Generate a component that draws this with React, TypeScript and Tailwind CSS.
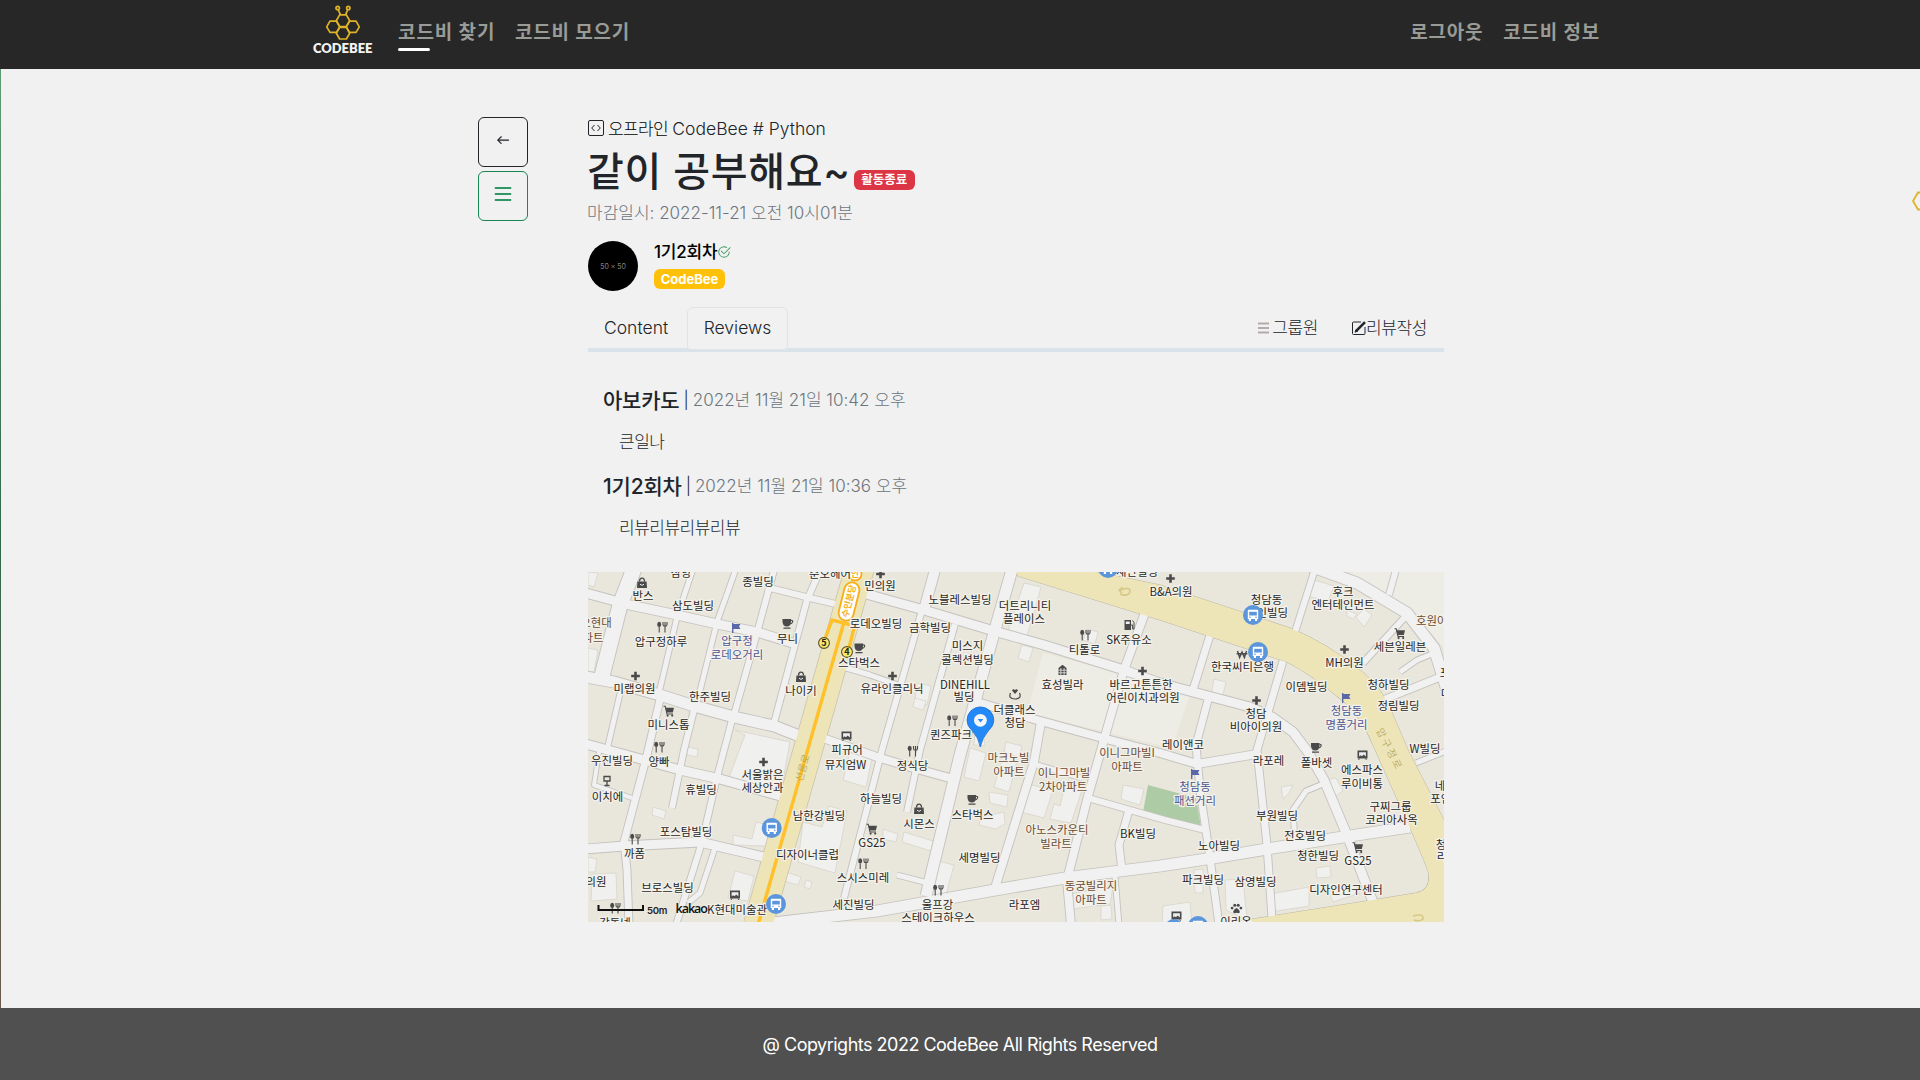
import React from "react";

type Pt = [number, number];

/* ---------- Logo ---------- */

const hex = (cx: number, cy: number, r: number) =>
  [0, 60, 120, 180, 240, 300]
    .map((a) => {
      const t = (a * Math.PI) / 180;
      return `${(cx + r * Math.cos(t)).toFixed(2)},${(cy + r * Math.sin(t)).toFixed(2)}`;
    })
    .join(" ");

function Logo() {
  return (
    <svg width="62" height="56" viewBox="312 0 62 56" className="block shrink-0">
      <g fill="none" stroke="#dfb327" strokeWidth="1.7" strokeLinejoin="round">
        <polygon points={hex(343, 20.7, 6.7)} />
        <polygon points={hex(333.2, 26.8, 6.5)} />
        <polygon points={hex(352.8, 26.8, 6.5)} />
        <polygon points={hex(343, 33.2, 6.7)} />
        <path d="M340.4 14.6 L338.2 9.6 M345.6 14.6 L347.8 9.6" />
        <circle cx="337.7" cy="8" r="1.7" />
        <circle cx="348.3" cy="8" r="1.7" />
      </g>
      <text x="313" y="53" textLength="59.5" lengthAdjust="spacingAndGlyphs" fill="#f4f4f4" fontFamily="Lato, sans-serif" fontWeight="800" fontSize="12.4">
        CODEBEE
      </text>
    </svg>
  );
}

/* ---------- Map data ---------- */

const roads: { w: number; p: Pt[] }[] = [
  { w: 15, p: [[635, 566], [620, 605], [602, 676]] },
  { w: 9, p: [[586, 593], [630, 605], [677, 615], [717, 624], [757, 632], [796, 644]] },
  { w: 11, p: [[586, 677], [614, 682], [660, 695], [694, 706], [734, 717], [774, 726], [802, 737]] },
  { w: 5, p: [[622, 685], [607, 750]] },
  { w: 5, p: [[694, 566], [677, 617], [659, 693]] },
  { w: 5, p: [[737, 566], [717, 622], [697, 703]] },
  { w: 6, p: [[774, 570], [757, 633], [734, 715]] },
  { w: 6, p: [[822, 566], [807, 600], [774, 723]] },
  { w: 6, p: [[766, 587], [810, 598], [840, 605]] },
  { w: 9, p: [[586, 744], [637, 758], [680, 770], [720, 779], [784, 797]] },
  { w: 7, p: [[661, 695], [647, 755], [624, 842], [627, 870], [629, 925]] },
  { w: 6, p: [[694, 710], [684, 750], [672, 808]] },
  { w: 6, p: [[732, 720], [717, 777], [702, 842], [676, 925]] },
  { w: 5, p: [[715, 848], [700, 893], [688, 903]] },
  { w: 9, p: [[586, 849], [624, 846], [700, 842], [764, 857]] },
  { w: 4, p: [[599, 752], [594, 785], [632, 798]] },
  { w: 8, p: [[820, 737], [877, 757], [917, 769], [957, 780]] },
  { w: 9, p: [[852, 590], [877, 597], [924, 610], [994, 631], [1044, 645], [1124, 670], [1160, 683], [1193, 692], [1250, 707], [1272, 717], [1293, 732], [1308, 752], [1324, 780], [1347, 835], [1373, 902]] },
  { w: 10, p: [[936, 566], [924, 610]] },
  { w: 6, p: [[922, 610], [882, 750], [844, 898]] },
  { w: 6, p: [[955, 624], [920, 750], [907, 812]] },
  { w: 11, p: [[1013, 566], [994, 633], [960, 755], [926, 896]] },
  { w: 5, p: [[836, 665], [870, 675], [898, 685]] },
  { w: 8, p: [[977, 702], [1037, 720], [1110, 740], [1160, 753], [1197, 764], [1257, 754]] },
  { w: 8, p: [[1041, 722], [1034, 762], [995, 888]] },
  { w: 5, p: [[1034, 764], [1082, 778]] },
  { w: 8, p: [[1146, 610], [1124, 670], [1105, 736], [1088, 796], [1067, 880], [1071, 925]] },
  { w: 6, p: [[1088, 798], [1130, 810], [1165, 820], [1205, 830]] },
  { w: 7, p: [[1129, 810], [1119, 845], [1122, 870]] },
  { w: 11, p: [[755, 925], [877, 911], [995, 890], [1065, 878], [1120, 871], [1160, 866], [1213, 858], [1273, 848], [1343, 837], [1410, 827]] },
  { w: 5, p: [[897, 875], [928, 883]] },
  { w: 5, p: [[1115, 876], [1119, 925]] },
  { w: 11, p: [[1310, 566], [1357, 583], [1407, 613], [1434, 648], [1447, 690]] },
  { w: 6, p: [[1314, 572], [1295, 632]] },
  { w: 6, p: [[1397, 566], [1389, 595]] },
  { w: 6, p: [[1405, 617], [1363, 663]] },
  { w: 5, p: [[1437, 652], [1417, 660], [1400, 672]] },
  { w: 7, p: [[1383, 700], [1445, 675]] },
  { w: 5, p: [[1416, 763], [1446, 751]] },
  { w: 7, p: [[1210, 635], [1193, 690]] },
  { w: 7, p: [[1208, 700], [1196, 745], [1200, 790], [1210, 858], [1219, 925]] },
  { w: 7, p: [[1283, 661], [1257, 750], [1267, 845], [1272, 918]] },
  { w: 5, p: [[1323, 784], [1306, 791], [1293, 810], [1295, 842]] },
];

const buildings: string[] = [
  "588,585 594,587 598,573 588,572",
  "588,648 598,650 594,672 588,672",
  "1024,583 1041,587 1027,636 1008,631",
  "1022,645 1033,648 1029,662 1018,658",
  "1087,629 1098,632 1095,644 1083,640",
  "735,730 790,742 780,797 728,780 745,735",
  "687,747 698,749 697,757 687,755",
  "653,807 666,811 664,819 652,815",
  "588,857 597,859 595,872 588,872",
  "592,874 616,873 617,899 591,901",
  "733,835 752,839 756,822 776,827 766,846 733,845",
  "735,871 754,876 748,901 728,898",
  "803,822 822,827 829,806 847,811 835,873 798,862",
  "786,872 801,877 798,885 784,881",
  "806,880 812,882 810,889 804,887",
  "850,752 872,758 866,787 843,780",
  "970,748 986,753 979,781 964,777",
  "1005,748 1021,745 1009,792 994,787",
  "989,792 1008,795 1007,807 990,803",
  "981,817 1004,812 1005,824 995,829 979,825",
  "1027,784 1053,790 1044,818 1021,812",
  "1065,785 1082,790 1071,823 1050,819 1054,804 1060,806",
  "1123,785 1144,789 1140,805 1121,799",
  "904,832 933,841 931,851 902,842",
  "883,829 898,834 896,842 883,839",
  "938,861 954,865 946,895 930,897",
  "1071,894 1113,886 1110,904 1072,909",
  "1101,906 1111,905 1112,919 1101,920",
  "1163,906 1190,902 1192,925 1162,925",
  "1194,870 1203,869 1203,893 1195,893",
  "1225,880 1243,879 1247,920 1226,910",
  "1271,894 1309,887 1309,906 1271,912",
  "1316,868 1330,866 1331,877 1317,878",
  "1329,892 1356,885 1360,893 1333,902",
  "1314,580 1334,586 1328,601 1307,596",
  "1356,617 1364,609 1372,615 1364,627",
  "1347,610 1357,614 1353,619 1347,616",
  "1214,679 1226,682 1222,699 1211,696",
  "1281,787 1293,785 1289,793 1283,799",
  "1327,780 1336,778 1343,791 1334,797",
  "917,683 931,686 927,705 915,700",
  "915,698 926,701 923,710 913,707",
  "974,745 985,746 983,733 975,731",
  "1006,742 1022,746 1019,757 1004,752",
];

type Label = { x: number; y: number; t: string; c?: string; s?: number };
const BROWN = "#6b4c34";
const NAVY = "#4b5692";
const labels: Label[] = [
  { x: 681, y: 573, t: "삼양" },
  { x: 643, y: 596, t: "반스" },
  { x: 758, y: 582, t: "종빌딩" },
  { x: 693, y: 605.5, t: "삼도빌딩" },
  { x: 830, y: 574, t: "준오헤어" },
  { x: 880, y: 586, t: "민의원" },
  { x: 596, y: 623, t: "오현대", c: BROWN },
  { x: 593, y: 637.5, t: "파트", c: BROWN },
  { x: 661, y: 641.5, t: "압구정하루" },
  { x: 737, y: 640.5, t: "압구정", c: NAVY },
  { x: 737, y: 654.5, t: "로데오거리", c: NAVY },
  { x: 787.5, y: 638.5, t: "무니" },
  { x: 876, y: 623.5, t: "로데오빌딩" },
  { x: 930, y: 627.5, t: "금학빌딩" },
  { x: 859, y: 662.5, t: "스타벅스" },
  { x: 634.5, y: 688.5, t: "미랩의원" },
  { x: 710, y: 697, t: "한주빌딩" },
  { x: 801, y: 690.5, t: "나이키" },
  { x: 892, y: 688.5, t: "유라인클리닉" },
  { x: 668.5, y: 724.5, t: "미니스톱" },
  { x: 847, y: 750, t: "피규어" },
  { x: 845.5, y: 764.5, t: "뮤지엄W" },
  { x: 612, y: 760.5, t: "우진빌딩" },
  { x: 659, y: 762, t: "양빠" },
  { x: 607.5, y: 796.5, t: "이치에" },
  { x: 701, y: 789.5, t: "휴빌딩" },
  { x: 762.5, y: 774.5, t: "서울밝은" },
  { x: 762.5, y: 788, t: "세상안과" },
  { x: 819, y: 815.5, t: "남한강빌딩" },
  { x: 881, y: 798.5, t: "하늘빌딩" },
  { x: 686, y: 831.5, t: "포스탐빌딩" },
  { x: 634.5, y: 853.5, t: "까폼" },
  { x: 807.5, y: 854.5, t: "디자이너클럽" },
  { x: 872, y: 843, t: "GS25" },
  { x: 863, y: 878, t: "스시스미레" },
  { x: 596, y: 882, t: "의원" },
  { x: 667.5, y: 887.5, t: "브로스빌딩" },
  { x: 853.5, y: 904.5, t: "세진빌딩" },
  { x: 737, y: 909.5, t: "K현대미술관" },
  { x: 615, y: 923, t: "강동넷" },
  { x: 960, y: 600, t: "노블레스빌딩" },
  { x: 1025, y: 605.5, t: "더트리니티" },
  { x: 1024, y: 618.5, t: "플레이스" },
  { x: 967.5, y: 646, t: "미스지" },
  { x: 967.5, y: 659.5, t: "콜렉션빌딩" },
  { x: 1084.5, y: 649.5, t: "티톨로" },
  { x: 1129, y: 640, t: "SK주유소" },
  { x: 965, y: 685, t: "DINEHILL" },
  { x: 964, y: 697, t: "빌딩" },
  { x: 1062.5, y: 685, t: "효성빌라" },
  { x: 1141, y: 684.5, t: "바르고튼튼한" },
  { x: 1143, y: 697.5, t: "어린이치과의원" },
  { x: 1014.5, y: 709.5, t: "더클래스" },
  { x: 1015, y: 722.5, t: "청담" },
  { x: 951, y: 734.5, t: "퀸즈파크" },
  { x: 912.5, y: 765.5, t: "정식당" },
  { x: 1008.5, y: 758, t: "마크노빌", c: BROWN },
  { x: 1009, y: 771.5, t: "아파트", c: BROWN },
  { x: 1064, y: 773, t: "이니그마빌", c: BROWN },
  { x: 1063, y: 787, t: "2차아파트", c: BROWN },
  { x: 1127, y: 753, t: "이니그마빌I", c: BROWN },
  { x: 1127, y: 767, t: "아파트", c: BROWN },
  { x: 972.5, y: 814.5, t: "스타벅스" },
  { x: 919, y: 824, t: "시몬스" },
  { x: 1057, y: 830, t: "아노스카운티", c: BROWN },
  { x: 1056, y: 844, t: "빌라트", c: BROWN },
  { x: 1138, y: 834, t: "BK빌딩" },
  { x: 979.5, y: 858, t: "세명빌딩" },
  { x: 1091, y: 886, t: "동궁빌리지", c: BROWN },
  { x: 1091, y: 899.5, t: "아파트", c: BROWN },
  { x: 1024.5, y: 904.5, t: "라포엠" },
  { x: 937.5, y: 904.5, t: "울프강" },
  { x: 938, y: 918, t: "스테이크하우스" },
  { x: 1137, y: 572, t: "새만빌딩" },
  { x: 1171, y: 592, t: "B&A의원" },
  { x: 1266.5, y: 600, t: "청담동" },
  { x: 1267, y: 613, t: "우인빌딩" },
  { x: 1343, y: 592, t: "후크" },
  { x: 1343, y: 605, t: "엔터테인먼트" },
  { x: 1437, y: 621, t: "호원아트", c: BROWN },
  { x: 1400, y: 647, t: "세븐일레븐" },
  { x: 1344.5, y: 663, t: "MH의원" },
  { x: 1242.5, y: 667, t: "한국씨티은행" },
  { x: 1306.5, y: 687, t: "이뎀빌딩" },
  { x: 1388.5, y: 685, t: "청하빌딩" },
  { x: 1398.5, y: 706, t: "정림빌딩" },
  { x: 1346.5, y: 711, t: "청담동", c: NAVY },
  { x: 1346.5, y: 725, t: "명품거리", c: NAVY },
  { x: 1256, y: 714, t: "청담" },
  { x: 1256, y: 727, t: "비아이의원" },
  { x: 1183, y: 745, t: "레이앤코" },
  { x: 1425, y: 749, t: "W빌딩" },
  { x: 1268.5, y: 761, t: "라포레" },
  { x: 1316.5, y: 762.5, t: "폴바셋" },
  { x: 1362, y: 770, t: "에스파스" },
  { x: 1362, y: 783.5, t: "루이비통" },
  { x: 1195, y: 787, t: "청담동", c: NAVY },
  { x: 1195, y: 800.5, t: "패션거리", c: NAVY },
  { x: 1277, y: 816, t: "부원빌딩" },
  { x: 1390.5, y: 807, t: "구찌그룹" },
  { x: 1391.5, y: 820, t: "코리아사옥" },
  { x: 1440, y: 786, t: "네" },
  { x: 1446, y: 799, t: "포인트" },
  { x: 1219, y: 845.5, t: "노아빌딩" },
  { x: 1305, y: 835.5, t: "전호빌딩" },
  { x: 1318, y: 856, t: "청한빌딩" },
  { x: 1358, y: 861, t: "GS25" },
  { x: 1441, y: 845, t: "청" },
  { x: 1442, y: 857, t: "리" },
  { x: 1203, y: 880, t: "파크빌딩" },
  { x: 1255.5, y: 882, t: "삼영빌딩" },
  { x: 1346, y: 890, t: "디자인연구센터" },
  { x: 1236, y: 922, t: "이리온" },
  { x: 1445, y: 673, t: "포" },
  { x: 1446, y: 694, t: "더" },
];

type Kind = "fork" | "cup" | "bag" | "plus" | "cart" | "flag" | "photo" | "fuel" | "ring" | "tower" | "wine" | "won" | "paw";
const pois: [Kind, number, number][] = [
  ["bag", 642, 583], ["fork", 662, 627], ["flag", 736, 628], ["cup", 787.5, 623.5], ["cup", 859.5, 648],
  ["plus", 635.5, 676], ["bag", 801, 677], ["cart", 669, 711], ["fork", 659, 747], ["photo", 846.5, 736],
  ["plus", 763.5, 762], ["wine", 607, 781], ["fork", 635, 839], ["cart", 872, 829], ["fork", 863, 863.5],
  ["photo", 735, 895], ["fork", 615, 908], ["plus", 880.5, 574], ["plus", 892.5, 676], ["fork", 952, 720.5],
  ["ring", 1015, 694], ["fork", 1085, 635], ["fuel", 1129, 625], ["tower", 1062.5, 670], ["plus", 1142.5, 671],
  ["fork", 912.5, 751], ["cup", 972.5, 799.5], ["bag", 919, 809], ["fork", 938, 890], ["plus", 1170.5, 578.5],
  ["won", 1242, 654], ["plus", 1344.5, 649.5], ["cart", 1400, 633.5], ["flag", 1346, 698], ["plus", 1256.5, 700.5],
  ["cup", 1316, 747.5], ["photo", 1362.5, 755], ["flag", 1195, 774], ["cart", 1358, 847.5], ["photo", 1176.5, 916],
  ["paw", 1236.5, 908.5],
];

function Poi({ kind, x, y }: { kind: Kind; x: number; y: number }) {
  const c = kind === "flag" ? "#5a68a8" : "#4a4a4a";
  const shapes: Record<Kind, React.ReactNode> = {
    fork: (
      <>
        <ellipse cx="-2.8" cy="-2.6" rx="2" ry="2.6" fill={c} />
        <path d="M-2.8 0V5.5M3 -1V5.5M1 -5V-2.5Q1 -0.7 3 -0.7Q5 -0.7 5 -2.5V-5M3 -5V-1" stroke={c} strokeWidth="1.1" fill="none" />
      </>
    ),
    cup: (
      <>
        <path d="M-5 -4.5H3.5V-1.5Q3 3 -0.5 3Q-4.5 3 -5 -1.5Z" fill={c} />
        <path d="M3.5 -3.2Q5.6 -3.4 5 -1.4Q4.4 .2 2.6 .3M-4 4.7H3" stroke={c} strokeWidth="1.2" fill="none" />
      </>
    ),
    bag: (
      <>
        <path d="M-4.6 -1.5H4.6L5 5H-5Z" fill={c} />
        <path d="M-2.5 -1.5Q-2.5 -4.8 0 -4.8Q2.5 -4.8 2.5 -1.5" stroke={c} strokeWidth="1.3" fill="none" />
        <path d="M-2 1.2Q0 3.6 2 1.2" stroke="#eee" strokeWidth="1" fill="none" />
      </>
    ),
    plus: <path d="M0 -4.3V4.3M-4.3 0H4.3" stroke={c} strokeWidth="2.6" />,
    cart: (
      <>
        <path d="M-3.5 -3.2H5L3.8 1.6H-2.4Z" fill={c} />
        <path d="M-5.5 -4.8H-3.8L-2 3H4" stroke={c} strokeWidth="1.1" fill="none" />
        <circle cx="-1.4" cy="4.6" r="1.1" fill={c} />
        <circle cx="3.2" cy="4.6" r="1.1" fill={c} />
      </>
    ),
    flag: <path d="M-4 -5H-2.6V-4H4.5L3 -1.5L4.5 1H-2.6V5H-4Z" fill={c} />,
    photo: (
      <>
        <path d="M-5 -4.5H5V3.5H-5Z" fill={c} />
        <path d="M-3.4 -2.8H3.4V1.6L1.2 -.6L-.6 1.2L-2 .2L-3.4 1.4Z" fill="#eee" />
        <path d="M-3 3.5L-4 5M3 3.5L4 5" stroke={c} />
      </>
    ),
    fuel: (
      <>
        <path d="M-4.5 -5H2V5H-4.5Z" fill={c} />
        <path d="M-3.2 -3.5H.7V-1H-3.2Z" fill="#eee" />
        <path d="M2 0H3.6V4H5V-2.5L3.5 -4.5" stroke={c} fill="none" />
      </>
    ),
    ring: (
      <>
        <path d="M-4.5 -1Q-7 4.8 0 5Q7 4.8 4.5 -1" stroke={c} strokeWidth="1.2" fill="none" />
        <path d="M0 0L-3 -3.4Q-2 -5.6 0 -4Q2 -5.6 3 -3.4Z" fill={c} />
      </>
    ),
    tower: (
      <>
        <path d="M-4 5V-2L0 -5.2L4 -2V5Z" fill={c} />
        <path d="M-1.6 -2V5M1.6 -2V5M-4 .2H4M-4 2.8H4" stroke="#eee" strokeWidth=".8" />
      </>
    ),
    wine: <path d="M-3 -4.5H3V0H-3ZM0 0V4.5M-2.5 4.5H2.5" stroke={c} strokeWidth="1.3" fill="none" />,
    won: <path d="M-4.5 -3L-2.4 3.5L0 -2L2.4 3.5L4.5 -3M-5.4 -.2H5.4" stroke={c} strokeWidth="1.4" fill="none" />,
    paw: (
      <g fill={c}>
        <path d="M0 -.6Q3.6 1.4 3.3 4Q1.8 5.2 0 4.2Q-1.8 5.2 -3.3 4Q-3.6 1.4 0 -.6Z" />
        <circle cx="-4.4" cy="-.4" r="1.4" />
        <circle cx="-1.7" cy="-3.2" r="1.5" />
        <circle cx="1.7" cy="-3.2" r="1.5" />
        <circle cx="4.4" cy="-.4" r="1.4" />
      </g>
    ),
  };
  return <g transform={`translate(${x} ${y})`}>{shapes[kind]}</g>;
}

const stops: Pt[] = [[771.7, 828], [776, 904], [1253, 615], [1258, 652], [1108, 568], [1198, 926], [1174, 929]];

function MapView() {
  const line = (p: Pt[]) => p.map((q) => q.join(",")).join(" ");
  const avenue =
    "M1077 568 L1160 585 L1290 628 Q1327 643 1360 670 Q1380 685 1390 708 L1408 750 L1446 824 V925 H1215 L1373 900 L1416 893 Q1430 890 1429 875 Q1428 868 1410 828 L1373 745 Q1360 712 1333 693 Q1310 674 1287 662 L1160 620 L1018 576 L1014 568 Z";
  return (
    <svg width="856" height="350" viewBox="588 572 856 350" className="block" fontFamily="'Noto Sans CJK KR', sans-serif">
      <rect x="588" y="572" width="856" height="350" fill="#e9e6dc" />
      <g fill="#eeede5">
        <polygon points="1043,653 1119,673 1103,731 1027,713" />
        <polygon points="1126,676 1190,694 1172,748 1110,733" />
        <polygon points="1346,570 1446,570 1446,650 1410,610" />
      </g>
      <g fill="#f0f0ef" stroke="#d8d4ca" strokeWidth=".8">
        {buildings.map((b) => (
          <polygon key={b} points={b} />
        ))}
      </g>
      <polygon points="1148,785 1196,798 1201,827 1143,812" fill="#adcba4" />
      <g fill="none" stroke="#c4c2bd" strokeLinejoin="round">
        {roads.map((r, i) => (
          <polyline key={i} points={line(r.p)} strokeWidth={r.w + 1.8} />
        ))}
      </g>
      <path d={avenue} fill="#ede4b8" stroke="#b9b5a6" />
      <path d="M864 553 L758 925" stroke="#c9c3ae" strokeWidth="30" />
      <g fill="none" stroke="#f1f1f1" strokeLinejoin="round">
        {roads.map((r, i) => (
          <polyline key={i} points={line(r.p)} strokeWidth={r.w} />
        ))}
      </g>
      <path d={avenue} fill="#ede4b8" />
      <path d="M864 553 L758 925" stroke="#ede4b8" strokeWidth="28.4" />
      <g fill="none" stroke="#ffc02a" strokeWidth="3.4">
        <path d="M844 622 L758.5 923" />
        <path d="M825 639 L832 620 L848 624 L854 628 L849 648" />
      </g>
      <g stroke="#d6c885" fill="none" strokeWidth="1.5">
        <path d="M1120 590 Q1131 586 1130 592 Q1128 597 1120 594 M1123 587 L1119 590 L1122 593" />
        <path d="M1413 916 Q1424 913 1423 919 Q1420 922 1414 920" />
      </g>
      <g fill="#fff" stroke="#f7ad16" strokeWidth="1.8">
        <rect x="829.5" y="594" width="39" height="15" rx="7.5" transform="rotate(-76 849 601.5)" />
        <circle cx="855" cy="574" r="6.5" />
      </g>
      <g fill="#f7ad16" fontSize="9" fontWeight="700" textAnchor="middle">
        <text transform="translate(852 602) rotate(-76)">수인분당</text>
        <text x="855" y="577">인</text>
      </g>
      <g fill="#a39748" fontSize="10" textAnchor="middle">
        <text transform="translate(806 769) rotate(-73)">선릉로</text>
        <text transform="translate(1386 750) rotate(63)" textLength="44">압구정로</text>
      </g>
      {[[824, 643, "5"], [847, 652, "4"]].map(([x, y, n]) => (
        <g key={n}>
          <circle cx={x} cy={y} r="5.4" fill="#fbea68" stroke="#55502a" strokeWidth="1.1" />
          <text x={x} y={Number(y) + 3.4} fontSize="9" fontWeight="700" textAnchor="middle" fill="#222">{n}</text>
        </g>
      ))}
      {pois.map(([k, x, y]) => (
        <Poi key={`${x}-${y}`} kind={k} x={x} y={y} />
      ))}
      <g fontSize="11.4" textAnchor="middle" stroke="#f3f1ea" strokeWidth="2.6" strokeLinejoin="round" style={{ paintOrder: "stroke" }}>
        {labels.map((l) => (
          <text key={`${l.t}${l.x}${l.y}`} x={l.x} y={l.y + 4.2} fill={l.c ?? "#262626"} fontWeight="400">
            {l.t}
          </text>
        ))}
      </g>
      {stops.map(([x, y]) => (
        <g key={`${x}-${y}`} transform={`translate(${x} ${y})`}>
          <circle r="10" fill="#5b95dc" />
          <path d="M-4.5 -5.2H4.5Q5.2 -5.2 5.2 -4V4H-5.2V-4Q-5.2 -5.2 -4.5 -5.2ZM-4.2 4H-2V6H-4.2ZM2 4H4.2V6H2Z" fill="#fff" />
          <path d="M-3.8 -3.2H3.8V.5H-3.8Z" fill="#5b95dc" />
          <circle cx="-3" cy="2.2" r=".8" fill="#5b95dc" />
          <circle cx="3" cy="2.2" r=".8" fill="#5b95dc" />
        </g>
      ))}
      <path d="M980.3 747 Q979 738 972 730.5 Q967 726 967 720.3 A13.4 13.4 0 0 1 993.8 720.3 Q993.8 726 988.6 730.5 Q982 738 980.3 747Z" fill="#2389f7" stroke="#1b6cd0" strokeWidth=".8" />
      <circle cx="980.4" cy="720.3" r="6.4" fill="#f4f6f8" />
      <path d="M977.7 719 H983.3 L980.5 722.4Z" fill="#2389f7" />
      <path d="M598.5 905 V910 H643 V905" fill="none" stroke="#111" strokeWidth="2" />
      <text x="647" y="914" fontSize="9.6" fontWeight="600" fill="#222" fontFamily="Inter, sans-serif" textLength="20.5">50m</text>
      <text x="675.5" y="913" fontSize="12.5" fontWeight="600" fill="#111" fontFamily="'Open Sans', sans-serif" textLength="32.5">kakao</text>
    </svg>
  );
}

/* ---------- Page ---------- */

function Header() {
  return (
    <header className="flex h-[69px] justify-between bg-[#272727] pl-[312px] pr-[320px] text-[19px] font-bold leading-none text-[#999b97]">
      <div className="flex">
        <Logo />
        <nav className="flex gap-[20px] pl-[24px] pt-[23px]">
          <a className="flex w-[97px] flex-col gap-[6px] whitespace-nowrap tracking-[0.9px]">
            코드비 찾기
            <span className="h-[3px] w-8 rounded-sm bg-white" />
          </a>
          <a className="whitespace-nowrap tracking-[0.8px]">코드비 모으기</a>
        </nav>
      </div>
      <nav className="flex gap-[20px] pt-[23px] tracking-[0.8px]">
        <a>로그아웃</a>
        <a>코드비 정보</a>
      </nav>
    </header>
  );
}

function Review({ name, date, body }: { name: string; date: string; body: string }) {
  return (
    <article className="h-[86px] pl-[15px]">
      <div className="flex h-6 items-center gap-1 whitespace-nowrap text-[17px] leading-none">
        <h5 className="text-[21px] font-medium tracking-[-0.2px]">{name}</h5>
        <span>|</span>
        <span className="text-[#6c757d]">{date}</span>
      </div>
      <p className="mt-[18px] flex h-6 items-center pl-4 text-[17px] leading-none tracking-[-0.5px]">{body}</p>
    </article>
  );
}

export default function App() {
  return (
    <div className="relative flex h-[1080px] w-[1920px] flex-col overflow-hidden bg-[#f1f1f1] font-[Inter,'Noto_Sans_CJK_KR',sans-serif] font-light text-[#212529]">
      <Header />
      <main className="flex flex-1 pl-[478px] pt-[48px]">
        <aside className="flex w-[110px] flex-col gap-1">
          <button className="flex size-[50px] items-center justify-center rounded-md border border-[#212529] pb-1">
            <svg width="16" height="16" viewBox="0 0 16 16" fill="#212529">
              <path fillRule="evenodd" d="M15 8a.5.5 0 0 0-.5-.5H2.7l3.15-3.15a.5.5 0 1 0-.7-.7l-4 4a.5.5 0 0 0 0 .7l4 4a.5.5 0 0 0 .7-.7L2.7 8.5h11.8A.5.5 0 0 0 15 8z" transform="translate(1.6 1.6) scale(.82)" stroke="#212529" strokeWidth=".6" />
            </svg>
          </button>
          <button className="flex size-[50px] items-center justify-center rounded-md border border-[#198754] pb-1">
            <svg width="18" height="14" viewBox="0 0 18 14" stroke="#2f9667" strokeWidth="1.8" strokeLinecap="round">
              <path d="M1.5 1H16.5M1.5 7H16.5M1.5 13H16.5" />
            </svg>
          </button>
        </aside>

        <section className="w-[856px]">
          <div className="flex h-6 items-center gap-1 whitespace-nowrap text-[17px] leading-none">
            <svg width="16" height="16" viewBox="0 0 16 16" fill="none" stroke="#212529" className="-mt-[2px]">
              <rect x=".5" y=".5" width="15" height="15" rx="1.5" />
              <path d="M6.5 5L3.7 8L6.5 11M9.5 5L12.3 8L9.5 11" />
            </svg>
            <span><span className="tracking-[-0.6px] text-black">오프라인 </span><span className="text-[17.5px]">CodeBee # Python</span></span>
          </div>
          <div className="flex h-[60px] items-center whitespace-nowrap">
            <h1 className="-ml-px mt-[2px] text-[40px] font-medium leading-none tracking-[0.7px]">같이 공부해요~</h1>
            <span className="ml-[3px] mt-[18px] flex h-5 w-[61px] items-center justify-center rounded-md bg-[#dc3545] text-[12.5px] font-bold leading-none text-white">활동종료</span>
          </div>
          <p className="-ml-px flex h-6 items-center whitespace-nowrap text-[17px] leading-none text-[#6c757d]">마감일시: 2022-11-21 오전 10시01분</p>

          <div className="mt-4 flex h-[50px] gap-4">
            <div className="flex size-[50px] items-center justify-center rounded-full bg-black text-[7px] leading-none text-[#aaa]">50 × 50</div>
            <div>
              <div className="flex h-[22px] items-center whitespace-nowrap pt-px text-[17px] font-medium leading-none tracking-[-0.2px] text-black">
                1기2회차
                <svg width="14" height="14" viewBox="0 0 16 16" fill="#37945f" className="-mt-[1px]">
                  <path d="M2.5 8a5.5 5.5 0 0 1 8.25-4.76.5.5 0 0 0 .5-.87A6.5 6.5 0 1 0 14.5 8a.5.5 0 0 0-1 0 5.5 5.5 0 1 1-11 0z" />
                  <path d="M15.35 3.35a.5.5 0 0 0-.7-.7L8 9.29 5.35 6.65a.5.5 0 1 0-.7.7l3 3a.5.5 0 0 0 .7 0l7-7z" />
                </svg>
              </div>
              <span className="mt-[6px] flex h-5 w-[71px] items-center justify-center rounded-md bg-[#ffc107] text-[13px] font-bold leading-none text-white">CodeBee</span>
            </div>
          </div>

          <div className="mt-[16px] flex h-[45px] items-start border-b-4 border-[#d9e3e9] text-[17.5px] leading-none">
            <div className="flex h-[42px] w-[99px] items-center pl-4">Content</div>
            <div className="flex h-[43px] w-[101px] shrink-0 items-center justify-center rounded-t-md rounded-b-sm border border-[#e0e4e6] bg-[#f1f1f1] pb-px">Reviews</div>
            <div className="ml-auto flex h-[42px] items-center gap-[33px] whitespace-nowrap pr-[17px] text-[17px] tracking-[-0.4px]">
              <span className="flex items-center gap-[2px]">
                <svg width="13" height="12" viewBox="0 0 13 12" stroke="#b3abab" strokeWidth="1.8"><path d="M1 1.500H12M1 6H12M1 10.500H12" /></svg>
                그룹원
              </span>
              <span className="flex items-center">
                <svg width="15" height="16" viewBox="0 0 15 16" fill="none" stroke="#212529">
                  <path d="M10 2H2.500Q1.500 2 1.500 3V13.500Q1.500 14.500 2.500 14.500H13Q14 14.500 14 13.500V7" />
                  <path d="M5 11.200L14 2.200" strokeWidth="2.600" />
                  <path d="M4 12.200L6.500 11.200L5 9.800Z" fill="#212529" />
                </svg>
                리뷰작성
              </span>
            </div>
          </div>

          <div className="h-[220px] pt-[36px]">
            <Review name="아보카도" date="2022년 11월 21일 10:42 오후" body="큰일나" />
            <Review name="1기2회차" date="2022년 11월 21일 10:36 오후" body="리뷰리뷰리뷰리뷰" />
          </div>
          <MapView />
        </section>
      </main>
      <footer className="flex h-[72px] items-center justify-center bg-[#505050] pt-[2px] text-[18px] font-normal leading-none tracking-[-0.5px] text-white">
        <span className="whitespace-nowrap">@ Copyrights 2022 CodeBee All Rights Reserved</span>
      </footer>
      <svg width="8" height="20" viewBox="0 0 8 20" className="absolute right-0 top-[191px]">
        <path d="M9 1.500H6L1 10L6 18.500H9" fill="none" stroke="#dfb327" strokeWidth="1.800" />
      </svg>
      <div className="absolute left-0 top-[69px] h-[939px] w-px bg-gradient-to-b from-[#5f9a76] via-[#2f6a4a] to-[#6a5a50]" />
    </div>
  );
}
